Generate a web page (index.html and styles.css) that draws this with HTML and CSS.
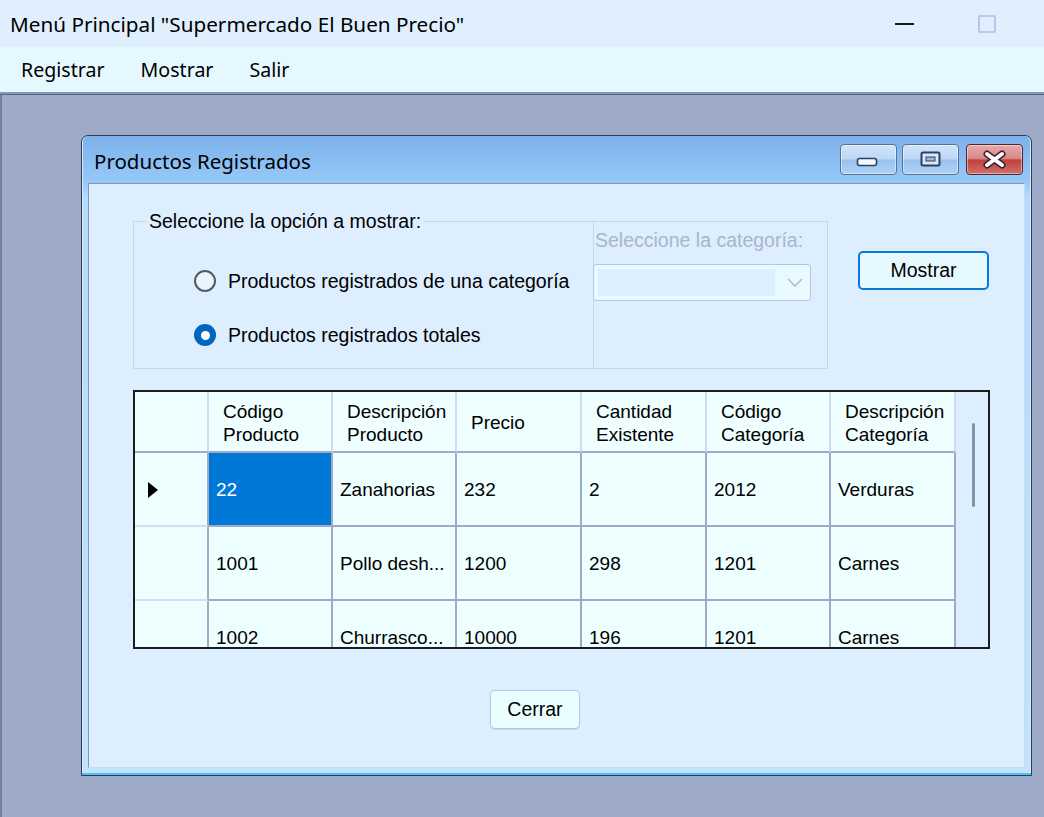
FILE: index.html
```html
<!DOCTYPE html>
<html lang="es">
<head>
<meta charset="utf-8">
<title>Menú Principal</title>
<link rel="stylesheet" href="styles.css">
</head>
<body>
<div class="app">
  <div class="titlebar">
    <span class="title">Menú Principal "Supermercado El Buen Precio"</span>
    <div class="tb-controls">
      <span class="tb-min"></span>
      <span class="tb-max"></span>
    </div>
  </div>
  <nav class="menubar">
    <span class="menu-item">Registrar</span>
    <span class="menu-item">Mostrar</span>
    <span class="menu-item">Salir</span>
  </nav>
  <div class="sep"></div>
  <main class="mdi">
    <section class="child">
      <header class="ctitle">
        <span class="ctitle-text">Productos Registrados</span>
        <div class="cbtns">
          <span class="cbtn">
            <svg width="55" height="29" viewBox="0 0 55 29"><rect x="16.5" y="13.5" width="19" height="7" rx="2" fill="#f4f8fc" stroke="#2e4163" stroke-width="1.6"/></svg>
          </span>
          <span class="cbtn">
            <svg width="55" height="29" viewBox="0 0 55 29"><rect x="18.5" y="7.5" width="18" height="13" rx="1.5" fill="#dbe8f6" stroke="#2e4163" stroke-width="2"/><rect x="23" y="12" width="9" height="4" fill="#9cb8dc" stroke="#2e4163" stroke-width="1"/></svg>
          </span>
          <span class="cbtn cbtn-close">
            <svg width="55" height="29" viewBox="0 0 55 29"><path d="M20 9 L35 20 M35 9 L20 20" stroke="#3b2130" stroke-width="7" stroke-linecap="round"/><path d="M20 9 L35 20 M35 9 L20 20" stroke="#ffffff" stroke-width="4" stroke-linecap="round"/></svg>
          </span>
        </div>
      </header>
      <div class="client">
        <div class="top-row">
          <div class="group">
            <div class="group-main">
              <span class="legend">Seleccione la opción a mostrar:</span>
              <label class="radio-row"><span class="radio"></span>Productos registrados de una categoría</label>
              <label class="radio-row row2"><span class="radio checked"></span>Productos registrados totales</label>
            </div>
            <div class="cat-panel">
              <div class="cat-label">Seleccione la categoría:</div>
              <div class="combo">
                <span class="combo-field"></span>
                <svg class="chev" width="16" height="9" viewBox="0 0 16 9"><path d="M1 1 L8 8 L15 1" fill="none" stroke="#a7b3cb" stroke-width="1.3"/></svg>
              </div>
            </div>
          </div>
          <button class="btn btn-default">Mostrar</button>
        </div>
        <div class="grid">
          <div class="grid-body">
            <table>
              <thead>
                <tr class="head">
                  <th class="c0"></th>
                  <th class="c1">Código<br>Producto</th>
                  <th class="c2">Descripción<br>Producto</th>
                  <th class="c3">Precio</th>
                  <th class="c4">Cantidad<br>Existente</th>
                  <th class="c5">Código<br>Categoría</th>
                  <th class="c6">Descripción<br>Categoría</th>
                </tr>
              </thead>
              <tbody>
                <tr>
                  <td class="rh"><span class="cur"></span></td>
                  <td class="sel">22</td>
                  <td>Zanahorias</td>
                  <td>232</td>
                  <td>2</td>
                  <td>2012</td>
                  <td>Verduras</td>
                </tr>
                <tr>
                  <td class="rh"></td>
                  <td>1001</td>
                  <td>Pollo desh...</td>
                  <td>1200</td>
                  <td>298</td>
                  <td>1201</td>
                  <td>Carnes</td>
                </tr>
                <tr>
                  <td class="rh"></td>
                  <td>1002</td>
                  <td>Churrasco...</td>
                  <td>10000</td>
                  <td>196</td>
                  <td>1201</td>
                  <td>Carnes</td>
                </tr>
              </tbody>
            </table>
          </div>
          <div class="vscroll"><span class="thumb"></span></div>
        </div>
        <button class="btn btn-close">Cerrar</button>
      </div>
    </section>
  </main>
</div>
</body>
</html>
```

FILE: styles.css
```css
* { box-sizing: border-box; }
html, body { margin: 0; padding: 0; }
body {
  width: 1044px;
  height: 817px;
  overflow: hidden;
  font-family: "Noto Sans", "Liberation Sans", sans-serif;
  background: #9daac8;
  color: #000;
}
.app { display: flex; flex-direction: column; height: 817px; }

/* main window title bar */
.titlebar {
  height: 47px;
  flex: none;
  background: #dfeffe;
  display: flex;
  align-items: center;
  padding-left: 10px;
}
.title { font-size: 20.7px; color: #000; padding-top: 1px; }
.tb-controls {
  margin-left: auto;
  display: flex;
  align-items: center;
  gap: 64px;
  padding-right: 48px;
}
.tb-min { display: block; width: 19px; height: 2px; background: #1b1b1b; }
.tb-max { display: block; width: 18px; height: 18px; border: 2px solid #bcc6ea; border-radius: 2px; }

/* menu bar */
.menubar {
  height: 45px;
  flex: none;
  background: #e6f8ff;
  display: flex;
  align-items: center;
  padding-left: 21px;
  gap: 36px;
  font-size: 19.6px;
}
.menu-item { color: #000; }
.sep { height: 3px; flex: none; background: #8798b8; border-bottom: 1px solid #56647e; }

/* MDI area */
.mdi {
  flex: 1;
  position: relative;
  background: #9daac8;
  border-left: 2px solid #74829e;
}
.child {
  position: absolute;
  left: 79px;
  top: 40px;
  width: 951px;
  height: 641px;
  border: 1px solid #2d3c52;
  border-radius: 7px 7px 0 0;
  background: linear-gradient(#7bb1e9 0px, #98c9fa 47px, #b4dafd 60px, #c2e2fd 100%);
  box-shadow: inset 0 -2px 0 #4cc2ee, inset 1px 0 0 #d6ecff, inset -1px 0 0 #d6ecff;
  display: flex;
  flex-direction: column;
}
.ctitle {
  height: 47px;
  flex: none;
  display: flex;
  align-items: flex-start;
  padding: 0 8px 0 12px;
}
.ctitle-text { font-size: 20.5px; line-height: 26px; padding-top: 12px; color: #000; }
.cbtns { margin-left: auto; margin-top: 8px; display: flex; gap: 5px; }
.cbtn {
  display: block;
  width: 57px;
  height: 31px;
  border: 1px solid #5b7192;
  border-radius: 4px;
  background: linear-gradient(#cfe4fa 0%, #bdd8f6 48%, #98c2ee 52%, #aed3f7 100%);
  box-shadow: inset 0 0 0 1px rgba(255,255,255,0.45);
}
.cbtn svg { display: block; }
.cbtn-close {
  margin-left: 2px;
  border-color: #4e2433;
  background: linear-gradient(#e6aaa8 0%, #d78a88 46%, #c2403b 52%, #d0706a 100%);
}

/* client area */
.client {
  flex: 1;
  margin: 0 6px 7px 6px;
  background: #ddeeff;
  border: 1px solid;
  border-color: #8797b2 #c7dcf2 #c7dcf2 #8797b2;
  padding: 37px 0 0 44px;
  font-family: "Liberation Sans", Arial, sans-serif;
  font-size: 19.5px;
  color: #000;
}
.top-row { display: flex; align-items: flex-start; }
.group {
  width: 695px;
  height: 148px;
  border: 1px solid #c6d6f0;
  display: flex;
}
.group-main { flex: 1; display: flex; flex-direction: column; align-items: flex-start; }
.legend {
  display: block;
  height: 22px;
  line-height: 22px;
  margin: -12px 0 0 12px;
  padding: 0 3px;
  background: #ddeeff;
  white-space: nowrap;
}
.radio-row {
  display: flex;
  align-items: center;
  height: 30px;
  margin: 34px 0 0 60px;
  gap: 12px;
  white-space: nowrap;
}
.radio-row.row2 { margin-top: 24px; }
.radio {
  display: block;
  flex: none;
  width: 22px;
  height: 22px;
  border-radius: 50%;
  border: 2px solid #555a60;
  background: #eaf4fd;
}
.radio.checked {
  border: none;
  background: #0066bf;
  display: flex;
  align-items: center;
  justify-content: center;
}
.radio.checked::after {
  content: "";
  width: 9px;
  height: 9px;
  border-radius: 50%;
  background: #fff;
}
.cat-panel { width: 234px; flex: none; border-left: 1px solid #c6d6f0; }
.cat-label { margin: 7px 0 0 1px; line-height: 22px; color: #a9b5cd; white-space: nowrap; }
.combo {
  margin: 13px 0 0 -1px;
  width: 218px;
  height: 37px;
  border: 1px solid #b6c5e2;
  border-radius: 3px;
  background: #e8f9ff;
  display: flex;
  align-items: center;
  padding-left: 4px;
}
.combo-field { display: block; width: 177px; height: 27px; background: #dcefff; }
.chev { display: block; margin-left: 12px; }

.btn {
  font-family: "Liberation Sans", Arial, sans-serif;
  font-size: 19.5px;
  color: #000;
  padding: 0;
  cursor: default;
}
.btn-default {
  margin: 30px 0 0 30px;
  width: 131px;
  height: 39px;
  border: 2px solid #0a78d6;
  border-radius: 5px;
  background: #e6f9ff;
}

/* data grid */
.grid {
  margin-top: 21px;
  width: 857px;
  height: 259px;
  border: 2px solid #1c1c1c;
  display: flex;
  background: #ddeeff;
}
.grid-body { width: 821px; height: 255px; overflow: hidden; flex: none; }
.grid table {
  border-collapse: separate;
  border-spacing: 0;
  table-layout: fixed;
  width: 821px;
  font-size: 19px;
}
.grid th, .grid td { box-sizing: border-box; }
.c0 { width: 74px; }
.c1, .c2, .c5 { width: 124px; }
.c3, .c4, .c6 { width: 125px; }
.grid tr.head { height: 61px; }
.grid tbody tr { height: 74px; }
.grid th {
  background: #effeff;
  font-weight: normal;
  text-align: left;
  line-height: 23px;
  padding: 2px 0 0 14px;
  vertical-align: middle;
  border-right: 2px solid #cadcef;
  border-bottom: 2px solid #9fabc6;
  white-space: nowrap;
}
.grid td {
  background: #eeffff;
  padding: 2px 0 0 7px;
  vertical-align: middle;
  border-right: 2px solid #9fabc6;
  border-bottom: 2px solid #9fabc6;
  white-space: nowrap;
  overflow: hidden;
}
.grid td.rh { border-bottom-color: #cde0f6; padding-left: 13px; }
.grid td.sel { background: #0078d7; color: #fff; }
.cur {
  display: block;
  width: 0;
  height: 0;
  border-left: 10px solid #000;
  border-top: 8px solid transparent;
  border-bottom: 8px solid transparent;
}
.vscroll { flex: 1; padding: 31px 0 0 16px; background: #ddeeff; }
.thumb { display: block; width: 3px; height: 84px; background: #8592ab; border-radius: 2px; }

.btn-close {
  display: block;
  margin: 41px 0 0 357px;
  width: 90px;
  height: 39px;
  border: 1px solid #b7c6e6;
  border-radius: 5px;
  background: #ebfeff;
  box-shadow: 0 1px 0 #c6d2ea;
}
```
